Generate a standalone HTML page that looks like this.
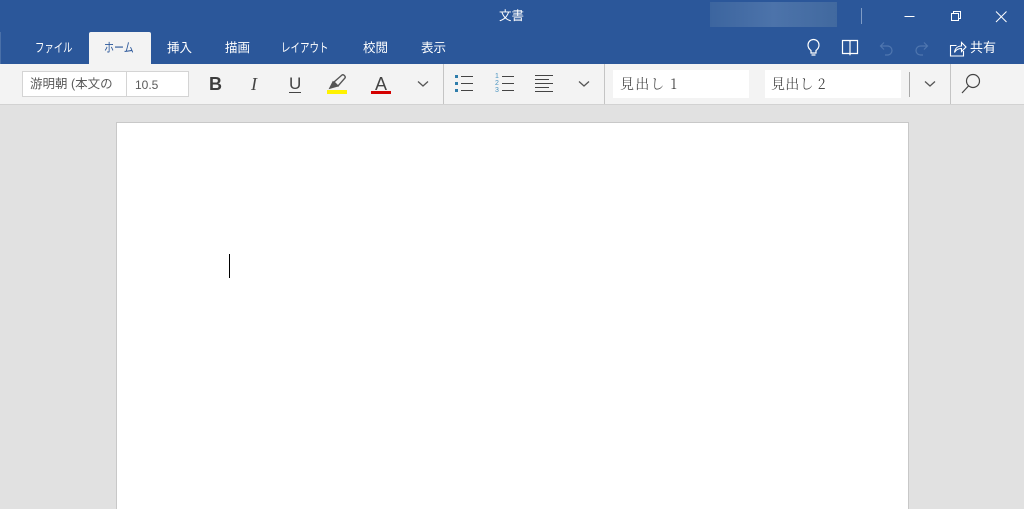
<!DOCTYPE html>
<html lang="ja"><head><meta charset="utf-8"><title>文書</title>
<style>
html,body{margin:0;padding:0;width:1024px;height:509px;overflow:hidden;background:#e1e1e1}
body{position:relative;font-family:"Liberation Sans","Noto Sans CJK JP",sans-serif}
.a{position:absolute}
.t{position:absolute;white-space:nowrap;line-height:16px;font-size:12.5px;color:#fff}
.n{transform-origin:0 50%}
svg{position:absolute;overflow:visible}
</style></head><body>
<div class="a" style="left:0;top:0;width:1024px;height:64px;background:#2b579a"></div>
<div class="a" style="left:0;top:32px;width:1px;height:32px;background:#4a70a8"></div>
<div class="a" style="left:710px;top:2px;width:127px;height:25px;background:linear-gradient(90deg,#3c659f,#4c73aa 50%,#41699f)"></div>
<div class="a" style="left:861px;top:8px;width:1px;height:16px;background:#7f9cc6"></div>
<div class="t" style="left:499px;top:8px">文書</div>
<div class="a" style="left:89px;top:32px;width:62px;height:32px;background:#f3f3f3;border-radius:2px 2px 0 0"></div>
<div class="t n" style="left:35px;top:40px;transform:scaleX(.75)">ファイル</div>
<div class="t n" style="left:104px;top:40px;color:#2b579a;transform:scaleX(.8)">ホーム</div>
<div class="t" style="left:167px;top:40px">挿入</div>
<div class="t" style="left:225px;top:40px">描画</div>
<div class="t n" style="left:281px;top:40px;transform:scaleX(.76)">レイアウト</div>
<div class="t" style="left:363px;top:40px">校閲</div>
<div class="t" style="left:421px;top:40px">表示</div>
<div class="t" style="left:970px;top:40px;font-size:13px">共有</div>

<svg style="left:0;top:0" width="1024" height="64" fill="none" stroke="#fff" stroke-width="1">
<path d="M904.500 16.500h10"/>
<path d="M951.500 13.500h7v7h-7zM953.500 13.500v-2h7v7h-2"/>
<path d="M996 11.500l10.500 10.500M1006.500 11.500l-10.500 10.500"/>
<path d="M811 50.500c-2-1.500-3-3-3-5.500a5.500 5.500 0 0 1 11 0c0 2.500-1 4-3 5.500v2.500h-5zM811.500 55h4" stroke-width="1.200"/>
<path d="M842.500 40.500h7l.5 1 .5-1h7v13h-7l-.5 1-.5-1h-7zM850 41.500v12" stroke-width="1.200"/>
<g stroke="#4f76af" stroke-width="1.200"><path d="M884 42.500l-3.500 3.500 3.500 3.500M881 46h6.500a4.500 4.500 0 0 1 0 9h-2.500"/><path d="M924 42.500l3.500 3.500-3.500 3.500M927 46h-6.500a4.500 4.500 0 0 0 0 9h2.500"/></g>
<path d="M956.500 45.500h-6v10.500h13v-5M954.500 52.500c.5-4 3-6.500 7-6.500v-3.500l4.500 4.500-4.500 4.500v-3c-3 0-5.500 1-7 4z" stroke-width="1.100"/>
</svg>

<div class="a" style="left:0;top:64px;width:1024px;height:40px;background:#f3f3f3;border-bottom:1px solid #d2d2d2"></div>
<div class="a" style="left:22px;top:71px;width:167px;height:26px;background:#fff"></div>
<div class="a" style="left:22px;top:71px;width:165px;height:24px;border:1px solid #d4d4d4"></div>
<div class="a" style="left:126px;top:71px;width:1px;height:26px;background:#d4d4d4"></div>
<div class="t" style="left:30px;top:76px;color:#5a5a5a">游明朝 (本文の</div>
<div class="t" style="left:135px;top:77px;color:#5a5a5a;font-size:12px">10.5</div>
<div class="t" style="left:209px;top:75px;font-size:18px;line-height:18px;font-weight:bold;color:#3c3c3c">B</div>
<div class="t" style="left:251px;top:75px;font-size:18px;line-height:18px;font-style:italic;font-family:'Liberation Serif',serif;color:#444">I</div>
<div class="t" style="left:289px;top:75px;font-size:17px;line-height:18px;color:#444">U</div>
<div class="a" style="left:289px;top:92px;width:12px;height:1px;background:#444"></div>
<div class="a" style="left:327px;top:90px;width:20px;height:4px;background:#fff200"></div>
<div class="t" style="left:375px;top:75px;font-size:18px;line-height:18px;color:#444">A</div>
<div class="a" style="left:371px;top:91px;width:20px;height:3px;background:#d40000"></div>

<div class="a" style="left:443px;top:64px;width:1px;height:40px;background:#c4c4c4"></div>
<div class="a" style="left:604px;top:64px;width:1px;height:40px;background:#c4c4c4"></div>
<div class="a" style="left:950px;top:64px;width:1px;height:40px;background:#c4c4c4"></div>
<div class="a" style="left:909px;top:72px;width:1px;height:25px;background:#a8a8a8"></div>

<div class="a" style="left:613px;top:70px;width:136px;height:28px;background:#fff"></div>
<div class="a" style="left:765px;top:70px;width:136px;height:28px;background:#fff"></div>
<div class="t" style="left:620px;top:75px;font-size:14px;line-height:18px;color:#333;font-family:'Noto Serif CJK SC','Liberation Serif',serif;font-weight:300;letter-spacing:1.200px">見出し 1</div>
<div class="t" style="left:771px;top:75px;font-size:14px;line-height:18px;color:#333;font-family:'Noto Serif CJK SC','Liberation Serif',serif;font-weight:300;letter-spacing:.3px">見出し 2</div>

<svg style="left:0;top:64px" width="1024" height="40" fill="none" stroke="#444" stroke-width="1">
<path d="M334 18l8-7c1.500-1 4 1.500 3 3l-7 8z" stroke="#555" stroke-width="1.400"/>
<path d="M329.500 24.500l3.500-7 5 4.500z" fill="#555" stroke="#555"/>
<path d="M418 17.500l5 4.500 5-4.500M579 17.500l5 4.500 5-4.500M925 17.500l5 4.500 5-4.500" stroke="#555" stroke-width="1.300"/>
<path d="M461 12.500h12M461 19.500h12M461 26.500h12"/>
<path d="M502 12.500h12M502 19.500h12M502 26.500h12"/>
<path d="M535 11.500h18M535 15.500h14M535 19.500h18M535 23.500h14M535 27.500h18"/>
<g fill="#2e7dab" stroke="none"><rect x="455" y="11" width="3" height="3"/><rect x="455" y="18" width="3" height="3"/><rect x="455" y="25" width="3" height="3"/></g>
<circle cx="973" cy="17" r="6.500" stroke-width="1.200"/>
<path d="M968.500 22l-6.500 7" stroke-width="1.200"/>
</svg>
<div class="t" style="left:495px;top:73px;font-size:7px;line-height:7px;color:#4a94c0">1</div>
<div class="t" style="left:495px;top:80px;font-size:7px;line-height:7px;color:#4a94c0">2</div>
<div class="t" style="left:495px;top:87px;font-size:7px;line-height:7px;color:#4a94c0">3</div>

<div class="a" style="left:116px;top:122px;width:793px;height:387px;background:#fff;border:1px solid #c8c8c8;border-bottom:0;box-sizing:border-box"></div>
<div class="a" style="left:229px;top:254px;width:1px;height:24px;background:#000"></div>
</body></html>
